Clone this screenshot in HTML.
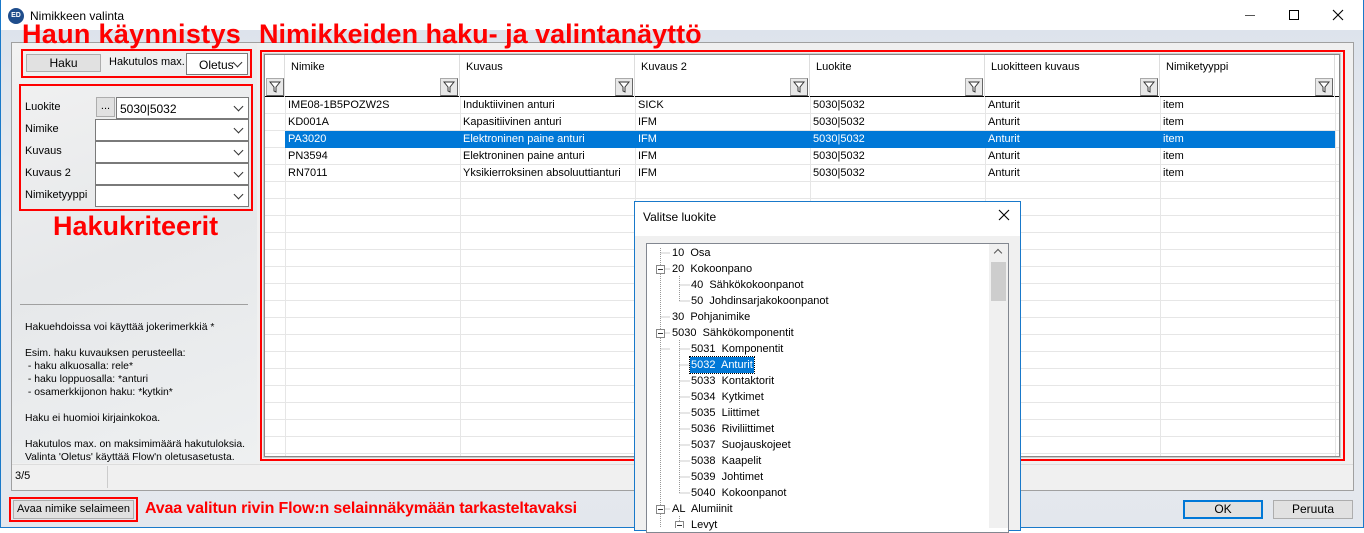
<!DOCTYPE html>
<html><head><meta charset="utf-8"><style>
*{box-sizing:border-box;margin:0;padding:0}
body{width:1364px;height:528px;overflow:hidden;position:relative;font-family:"Liberation Sans",Arial,sans-serif;font-size:11px;color:#000;background:#fff}
.a{position:absolute}
.red{color:#ff0000;font-weight:bold;white-space:nowrap}
.rb{border:2px solid #f00}
.combo{background:#fff;border:1px solid #7a7a7a;height:21px}
.chev{position:absolute;right:6px;top:5px;width:7px;height:7px;border-right:1px solid #333;border-bottom:1px solid #333;transform:rotate(45deg)}
.lbl{position:absolute;font-size:11px}
.hc{position:absolute;top:0;height:42px;border-right:1px solid #ddd;padding:6px 0 0 6px}
.flt{position:absolute;width:18px;height:18px;top:23px;background:#e8e8e8;border:1px solid #aaa;border-right-color:#666;border-bottom-color:#666}
.flt svg{position:absolute;left:2px;top:2px}
.row{position:absolute;left:20px;width:1050px;height:17px;line-height:17px}
.row span{position:absolute;top:0;padding-left:3px;white-space:nowrap}
.tn{position:absolute;white-space:nowrap;font-size:11px;line-height:16px}
.btn{position:absolute;background:#e1e1e1;border:1px solid #adadad;text-align:center;font-size:11px}
</style></head><body>
<div class="a" style="left:0;top:0;width:1364px;height:528px;border:1px solid #1979ca;border-top:none"></div>
<div class="a" style="left:1px;top:30px;width:1362px;height:497px;background:linear-gradient(180deg,#dde3ec 0,#e9ecf1 40%,#e3e7ed 100%)"></div>
<div class="a" style="left:8px;top:8px;width:16px;height:16px;border-radius:50%;background:#1f4d8c;color:#fff;font-size:7px;font-weight:bold;text-align:center;line-height:16px">ED</div>
<div class="a" style="left:30px;top:9px;font-size:12px">Nimikkeen valinta</div>
<div class="a" style="left:1245px;top:15px;width:10px;height:1px;background:#555"></div>
<div class="a" style="left:1289px;top:10px;width:10px;height:10px;border:1px solid #000"></div>
<svg class="a" style="left:1332px;top:9px" width="12" height="12"><path d="M1 1L11 11M11 1L1 11" stroke="#000" stroke-width="1.1"/></svg>
<div class="a" style="left:11px;top:42px;width:1343px;height:449px;border:1px solid #a0a0a0;background:#f0f0f0"></div>
<div class="a" style="left:12px;top:43px;width:245px;height:420px;background:linear-gradient(160deg,#f2f2f2,#e6e8ea 50%,#eef0f1)"></div>
<div class="a" style="left:12px;top:464px;width:1341px;height:26px;background:#f0f0f0;border-top:1px solid #ddd"></div>
<div class="a" style="left:107px;top:466px;width:1px;height:22px;background:#ccc"></div>
<div class="a" style="left:15px;top:470px;font-size:11px">3/5</div>
<div class="a red" style="left:22px;top:19px;font-size:27px;letter-spacing:0.3px">Haun käynnistys</div>
<div class="a red" style="left:259px;top:19px;font-size:27px">Nimikkeiden haku- ja valintanäyttö</div>
<div class="a red" style="left:53px;top:211px;font-size:27px">Hakukriteerit</div>
<div class="a red" style="left:145px;top:500px;font-size:16px;letter-spacing:-0.15px">Avaa valitun rivin Flow:n selainnäkymään tarkasteltavaksi</div>
<div class="a rb" style="left:21px;top:49px;width:231px;height:29px"></div>
<div class="btn" style="left:26px;top:54px;width:75px;height:18px;line-height:16px;font-size:12px">Haku</div>
<div class="a" style="left:109px;top:56px;font-size:11px">Hakutulos max.</div>
<div class="a combo" style="left:186px;top:53px;width:62px;height:22px;background:#fff"><span class="a" style="left:12px;top:4px;font-size:12px">Oletus</span><div class="chev"></div></div>
<div class="a rb" style="left:19px;top:84px;width:234px;height:127px"></div>
<div class="lbl" style="left:25px;top:101px">Luokite</div>
<div class="btn" style="left:96px;top:97px;width:19px;height:20px;line-height:16px">...</div>
<div class="a combo" style="left:116px;top:97px;width:133px;height:22px"><span class="a" style="left:3px;top:4px;font-size:12px">5030|5032</span><div class="chev"></div></div>
<div class="lbl" style="left:25px;top:123px">Nimike</div>
<div class="a combo" style="left:95px;top:119px;width:154px;height:22px"><div class="chev"></div></div>
<div class="lbl" style="left:25px;top:145px">Kuvaus</div>
<div class="a combo" style="left:95px;top:141px;width:154px;height:22px"><div class="chev"></div></div>
<div class="lbl" style="left:25px;top:167px">Kuvaus 2</div>
<div class="a combo" style="left:95px;top:163px;width:154px;height:22px"><div class="chev"></div></div>
<div class="lbl" style="left:25px;top:189px">Nimiketyyppi</div>
<div class="a combo" style="left:95px;top:185px;width:154px;height:22px"><div class="chev"></div></div>
<div class="a" style="left:20px;top:304px;width:228px;height:1px;background:#a0a0a0"></div>
<div class="a" style="left:25px;top:321px;font-size:10.4px;line-height:13px;white-space:pre">Hakuehdoissa voi käyttää jokerimerkkiä *

Esim. haku kuvauksen perusteella:
 - haku alkuosalla: rele*
 - haku loppuosalla: *anturi
 - osamerkkijonon haku: *kytkin*

Haku ei huomioi kirjainkokoa.

Hakutulos max. on maksimimäärä hakutuloksia.
Valinta 'Oletus' käyttää Flow'n oletusasetusta.</div>
<div class="a rb" style="left:260px;top:50px;width:1085px;height:411px"></div>
<div class="a" style="left:264px;top:54px;width:1076px;height:403px;border:1px solid #888;outline:1px solid #ccc;background:#fff;overflow:hidden">
 <div class="a" style="left:0;top:42px;width:1076px;height:360px;background:repeating-linear-gradient(180deg,transparent 0,transparent 16px,#e6e6e6 16px,#e6e6e6 17px)"></div>
 <div class="a" style="left:0;top:0;width:1076px;height:42px;border-bottom:1px solid #000"></div>
 <div class="hc" style="left:0;width:20px"></div><div class="flt" style="left:1px"><svg width="12" height="12"><path d="M1 1H11L7 6V11L5 10V6Z" fill="#fff" stroke="#333"/></svg></div>
 <div class="hc" style="left:20px;width:175px">Nimike</div><div class="flt" style="left:175px"><svg width="12" height="12"><path d="M1 1H11L7 6V11L5 10V6Z" fill="#fff" stroke="#333"/></svg></div>
 <div class="hc" style="left:195px;width:175px">Kuvaus</div><div class="flt" style="left:350px"><svg width="12" height="12"><path d="M1 1H11L7 6V11L5 10V6Z" fill="#fff" stroke="#333"/></svg></div>
 <div class="hc" style="left:370px;width:175px">Kuvaus 2</div><div class="flt" style="left:525px"><svg width="12" height="12"><path d="M1 1H11L7 6V11L5 10V6Z" fill="#fff" stroke="#333"/></svg></div>
 <div class="hc" style="left:545px;width:175px">Luokite</div><div class="flt" style="left:700px"><svg width="12" height="12"><path d="M1 1H11L7 6V11L5 10V6Z" fill="#fff" stroke="#333"/></svg></div>
 <div class="hc" style="left:720px;width:175px">Luokitteen kuvaus</div><div class="flt" style="left:875px"><svg width="12" height="12"><path d="M1 1H11L7 6V11L5 10V6Z" fill="#fff" stroke="#333"/></svg></div>
 <div class="hc" style="left:895px;width:175px">Nimiketyyppi</div><div class="flt" style="left:1050px"><svg width="12" height="12"><path d="M1 1H11L7 6V11L5 10V6Z" fill="#fff" stroke="#333"/></svg></div>
 <div class="a" style="left:20px;top:42px;width:1px;height:360px;background:#e6e6e6"></div>
 <div class="a" style="left:195px;top:42px;width:1px;height:360px;background:#e6e6e6"></div>
 <div class="a" style="left:370px;top:42px;width:1px;height:360px;background:#e6e6e6"></div>
 <div class="a" style="left:545px;top:42px;width:1px;height:360px;background:#e6e6e6"></div>
 <div class="a" style="left:720px;top:42px;width:1px;height:360px;background:#e6e6e6"></div>
 <div class="a" style="left:895px;top:42px;width:1px;height:360px;background:#e6e6e6"></div>
 <div class="a" style="left:1070px;top:42px;width:1px;height:360px;background:#e6e6e6"></div>
 <div class="row" style="top:42px"><span style="left:0">IME08-1B5POZW2S</span><span style="left:175px">Induktiivinen anturi</span><span style="left:350px">SICK</span><span style="left:525px">5030|5032</span><span style="left:700px">Anturit</span><span style="left:875px">item</span></div>
 <div class="row" style="top:59px"><span style="left:0">KD001A</span><span style="left:175px">Kapasitiivinen anturi</span><span style="left:350px">IFM</span><span style="left:525px">5030|5032</span><span style="left:700px">Anturit</span><span style="left:875px">item</span></div>
 <div class="row" style="top:76px;background:#0078d7;color:#fff;width:1050px"><span style="left:0">PA3020</span><span style="left:175px">Elektroninen paine anturi</span><span style="left:350px">IFM</span><span style="left:525px">5030|5032</span><span style="left:700px">Anturit</span><span style="left:875px">item</span></div>
 <div class="row" style="top:93px"><span style="left:0">PN3594</span><span style="left:175px">Elektroninen paine anturi</span><span style="left:350px">IFM</span><span style="left:525px">5030|5032</span><span style="left:700px">Anturit</span><span style="left:875px">item</span></div>
 <div class="row" style="top:110px"><span style="left:0">RN7011</span><span style="left:175px">Yksikierroksinen absoluuttianturi</span><span style="left:350px">IFM</span><span style="left:525px">5030|5032</span><span style="left:700px">Anturit</span><span style="left:875px">item</span></div>
</div>
<div class="a rb" style="left:9px;top:497px;width:129px;height:25px"></div>
<div class="btn" style="left:13px;top:500px;width:121px;height:19px;line-height:17px">Avaa nimike selaimeen</div>
<div class="btn" style="left:1183px;top:500px;width:80px;height:19px;line-height:15px;border:2px solid #0078d7;font-size:12px">OK</div>
<div class="btn" style="left:1273px;top:500px;width:80px;height:19px;line-height:17px;font-size:12px">Peruuta</div>
<div class="a" style="left:634px;top:201px;width:387px;height:330px;border:1px solid #1979ca;background:#f0f0f0"></div>
<div class="a" style="left:635px;top:202px;width:385px;height:34px;background:#fff"></div>
<div class="a" style="left:643px;top:210px;font-size:12px">Valitse luokite</div>
<svg class="a" style="left:998px;top:209px" width="12" height="12"><path d="M1 1L11 11M11 1L1 11" stroke="#000" stroke-width="1.1"/></svg>
<div class="a" style="left:646px;top:243px;width:363px;height:290px;border:1px solid #828790;background:#fff"></div>
<div class="a" style="left:989px;top:244px;width:19px;height:284px;background:#f0f0f0"></div>
<div class="a" style="left:991px;top:262px;width:15px;height:39px;background:#cdcdcd"></div>
<div class="a" style="left:995px;top:250px;width:6px;height:6px;border-left:1px solid #555;border-top:1px solid #555;transform:rotate(45deg)"></div>
<svg class="a" style="left:646px;top:244px" width="60" height="284"><g stroke="#999" stroke-dasharray="1 1" fill="none"><path d="M14.5 4V284M14.5 9H24M14.5 25H24M14.5 73H24M14.5 89H24M14.5 105H24M14.5 265H24M33.5 32V57M33.5 41H44M33.5 57H44M33.5 96V249M33.5 105H44M33.5 121H44M33.5 137H44M33.5 153H44M33.5 169H44M33.5 185H44M33.5 201H44M33.5 217H44M33.5 233H44M33.5 249H44M33.5 272V284"/></g>
<g fill="#fff" stroke="#888"><rect x="10.5" y="21.5" width="8" height="8"/><rect x="10.5" y="85.5" width="8" height="8"/><rect x="10.5" y="261.5" width="8" height="8"/><rect x="29.5" y="277.5" width="8" height="8"/></g>
<g stroke="#333"><path d="M12 25.5H17M12 89.5H17M12 265.5H17M31 281.5H36"/></g></svg>
<div class="tn" style="left:672px;top:245px">10&nbsp; Osa</div>
<div class="tn" style="left:672px;top:261px">20&nbsp; Kokoonpano</div>
<div class="tn" style="left:691px;top:277px">40&nbsp; Sähkökokoonpanot</div>
<div class="tn" style="left:691px;top:293px">50&nbsp; Johdinsarjakokoonpanot</div>
<div class="tn" style="left:672px;top:309px">30&nbsp; Pohjanimike</div>
<div class="tn" style="left:672px;top:325px">5030&nbsp; Sähkökomponentit</div>
<div class="tn" style="left:691px;top:341px">5031&nbsp; Komponentit</div>
<div class="tn" style="left:690px;top:357px;background:#0078d7;color:#fff;outline:1px dotted #000;padding:0 1px">5032&nbsp; Anturit</div>
<div class="tn" style="left:691px;top:373px">5033&nbsp; Kontaktorit</div>
<div class="tn" style="left:691px;top:389px">5034&nbsp; Kytkimet</div>
<div class="tn" style="left:691px;top:405px">5035&nbsp; Liittimet</div>
<div class="tn" style="left:691px;top:421px">5036&nbsp; Riviliittimet</div>
<div class="tn" style="left:691px;top:437px">5037&nbsp; Suojauskojeet</div>
<div class="tn" style="left:691px;top:453px">5038&nbsp; Kaapelit</div>
<div class="tn" style="left:691px;top:469px">5039&nbsp; Johtimet</div>
<div class="tn" style="left:691px;top:485px">5040&nbsp; Kokoonpanot</div>
<div class="tn" style="left:672px;top:501px">AL&nbsp; Alumiinit</div>
<div class="tn" style="left:691px;top:517px">Levyt</div>
</body></html>
